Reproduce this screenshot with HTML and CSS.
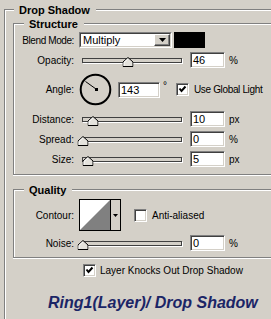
FILE: index.html
```html
<!DOCTYPE html>
<html>
<head>
<meta charset="utf-8">
<link rel="stylesheet" href="styles.css">
</head>
<body>
<div class="panel">
  <div class="group outer">
    <div class="ghead"><span class="seg-l"></span><span class="gtitle">Drop Shadow</span><span class="seg-r"></span></div>
    <div class="gbody outer-body">
      <div class="group inner">
        <div class="ghead"><span class="seg-l seg-in"></span><span class="gtitle">Structure</span><span class="seg-r"></span></div>
        <div class="gbody inner-body structure-body">
          <div class="row r-blend">
            <span class="lbl lbl-tight">Blend Mode:</span>
            <div class="select">
              <div class="sel-in">
                <span class="sel-text">Multiply</span>
                <span class="sel-btn"><svg width="7" height="4" viewBox="0 0 7 4"><polygon points="0,0 7,0 3.5,4" fill="#000"/></svg></span>
              </div>
            </div>
            <span class="swatch"></span>
          </div>
          <div class="row r-slider r-opacity">
            <span class="lbl">Opacity:</span>
            <div class="slider"><div class="track"><span class="thumb" style="left:46%"><svg width="11" height="10" viewBox="0 0 11 10"><polygon points="5.5,0.5 10.5,5 10.5,9.5 0.5,9.5 0.5,5" fill="#e4e2dc" stroke="#000"/><polyline points="1.5,9 1.5,5.4 5.5,1.8" fill="none" stroke="#fff"/></svg></span></div></div>
            <div class="field">46</div><span class="unit">%</span>
          </div>
          <div class="row r-angle">
            <span class="lbl">Angle:</span>
            <svg class="dial" width="33" height="33" viewBox="0 0 33 33"><circle cx="16.5" cy="16.5" r="14.8" fill="none" stroke="#000" stroke-width="2"/><line x1="17" y1="16" x2="6.5" y2="8.5" stroke="#000" stroke-width="1"/><rect x="16" y="15" width="3" height="3" fill="#000"/></svg>
            <div class="field field-angle">143</div><span class="deg">°</span>
            <span class="cb cb-global"><svg width="9" height="9" viewBox="0 0 9 9"><polyline points="1.5,3.5 3.5,6 7.5,1.5" fill="none" stroke="#000" stroke-width="2"/></svg></span>
            <span class="cb-text cb-tight">Use Global Light</span>
          </div>
          <div class="row r-slider r-distance">
            <span class="lbl">Distance:</span>
            <div class="slider"><div class="track"><span class="thumb" style="left:10%"><svg width="11" height="10" viewBox="0 0 11 10"><polygon points="5.5,0.5 10.5,5 10.5,9.5 0.5,9.5 0.5,5" fill="#e4e2dc" stroke="#000"/><polyline points="1.5,9 1.5,5.4 5.5,1.8" fill="none" stroke="#fff"/></svg></span></div></div>
            <div class="field">10</div><span class="unit">px</span>
          </div>
          <div class="row r-slider r-next">
            <span class="lbl">Spread:</span>
            <div class="slider"><div class="track"><span class="thumb" style="left:0%"><svg width="11" height="10" viewBox="0 0 11 10"><polygon points="5.5,0.5 10.5,5 10.5,9.5 0.5,9.5 0.5,5" fill="#e4e2dc" stroke="#000"/><polyline points="1.5,9 1.5,5.4 5.5,1.8" fill="none" stroke="#fff"/></svg></span></div></div>
            <div class="field">0</div><span class="unit">%</span>
          </div>
          <div class="row r-slider r-next">
            <span class="lbl">Size:</span>
            <div class="slider"><div class="track"><span class="thumb" style="left:5%"><svg width="11" height="10" viewBox="0 0 11 10"><polygon points="5.5,0.5 10.5,5 10.5,9.5 0.5,9.5 0.5,5" fill="#e4e2dc" stroke="#000"/><polyline points="1.5,9 1.5,5.4 5.5,1.8" fill="none" stroke="#fff"/></svg></span></div></div>
            <div class="field">5</div><span class="unit">px</span>
          </div>
        </div>
      </div>

      <div class="group inner quality">
        <div class="ghead"><span class="seg-l seg-in"></span><span class="gtitle">Quality</span><span class="seg-r"></span></div>
        <div class="gbody inner-body quality-body">
          <div class="row r-contour">
            <span class="lbl">Contour:</span>
            <div class="contour">
              <svg class="ct-graph" width="30" height="30" viewBox="0 0 30 30"><rect width="30" height="30" fill="#fff"/><polygon points="0,30 30,0 30,30" fill="#808080"/></svg>
              <span class="ct-btn"><svg width="5" height="3" viewBox="0 0 5 3"><polygon points="0,0 5,0 2.5,3" fill="#000"/></svg></span>
            </div>
            <span class="cb cb-anti"></span>
            <span class="cb-text">Anti-aliased</span>
          </div>
          <div class="row r-slider r-noise">
            <span class="lbl">Noise:</span>
            <div class="slider"><div class="track"><span class="thumb" style="left:0%"><svg width="11" height="10" viewBox="0 0 11 10"><polygon points="5.5,0.5 10.5,5 10.5,9.5 0.5,9.5 0.5,5" fill="#e4e2dc" stroke="#000"/><polyline points="1.5,9 1.5,5.4 5.5,1.8" fill="none" stroke="#fff"/></svg></span></div></div>
            <div class="field">0</div><span class="unit">%</span>
          </div>
        </div>
      </div>

      <div class="row r-knock">
        <span class="cb"><svg width="9" height="9" viewBox="0 0 9 9"><polyline points="1.5,3.5 3.5,6 7.5,1.5" fill="none" stroke="#000" stroke-width="2"/></svg></span>
        <span class="cb-text">Layer Knocks Out Drop Shadow</span>
      </div>

      <div class="caption">Ring1(Layer)/ Drop Shadow</div>
    </div>
  </div>
</div>
</body>
</html>
```
FILE: styles.css
```css
* { box-sizing: border-box; }
html, body { margin: 0; }
body {
  background: #d4d0c8;
  font-family: "Liberation Sans", Arial, sans-serif;
  font-size: 10px;
  color: #000;
  width: 271px;
  height: 319px;
  overflow: hidden;
}
.panel { padding-top: 3px; }
.group { display: flex; flex-direction: column; }
.outer { margin-left: 4px; }
.ghead { display: flex; height: 14px; }
.seg-l {
  width: 10px;
  margin-top: 6px;
  border-top: 1px solid #808080;
  border-left: 1px solid #808080;
  box-shadow: inset 1px 1px #fff;
}
.seg-in { width: 11px; }
.seg-r {
  flex: 1;
  margin-top: 6px;
  border-top: 1px solid #808080;
  box-shadow: inset 0 1px #fff;
}
.gtitle {
  font-weight: bold;
  font-size: 11px;
  line-height: 14px;
  padding: 0 6px 0 5px;
  white-space: nowrap;
}
.gbody {
  border-left: 1px solid #808080;
  box-shadow: inset 1px 0 #fff;
}
.outer-body { height: 302px; }
.inner { margin-left: 8px; }
.quality { margin-top: 8px; }
.inner-body {
  border-bottom: 1px solid #808080;
  box-shadow: inset 1px 0 #fff, 0 1px #fff;
}
.structure-body { padding-bottom: 7px; }
.quality-body { padding-bottom: 6px; }

.row { display: flex; align-items: center; white-space: nowrap; }
.lbl { width: 60px; margin-right: 5px; text-align: right; }
.lbl-tight { letter-spacing: -0.4px; }

.r-blend { margin-top: 1px; height: 16px; }
.r-opacity { margin-top: 4px; }
.r-angle { margin-top: 5px; height: 33px; }
.r-distance { margin-top: 5px; }
.r-next { margin-top: 4px; }
.r-contour { margin-top: 2px; height: 32px; }
.r-noise { margin-top: 4px; }

.select {
  width: 93px;
  height: 16px;
  border: 1px solid;
  border-color: #808080 #fff #fff #808080;
  display: flex;
}
.sel-in {
  flex: 1;
  display: flex;
  align-items: center;
  background: #fff;
  border: 1px solid;
  border-color: #404040 #d4d0c8 #d4d0c8 #404040;
}
.sel-text { flex: 1; font-size: 11px; padding-left: 2px; line-height: 12px; }
.sel-btn {
  width: 16px;
  height: 12px;
  background: #d4d0c8;
  border: 1px solid;
  border-color: #fff #404040 #404040 #fff;
  box-shadow: inset -1px -1px #808080;
  display: flex;
  align-items: center;
  justify-content: center;
}
.swatch { width: 31px; height: 16px; background: #000; margin-left: 2px; }

.slider {
  width: 106px;
  height: 16px;
  padding: 0 3px;
  display: flex;
  align-items: center;
}
.track {
  position: relative;
  flex: 1;
  height: 5px;
  border: 1px solid #404040;
  box-shadow: 1px 1px 0 #fff;
  background: #d4d0c8;
}
.thumb {
  position: absolute;
  top: -2px;
  width: 11px;
  height: 10px;
  transform: translateX(-50%);
  display: block;
}
.thumb svg { display: block; }

.field {
  width: 35px;
  height: 16px;
  margin-left: 5px;
  background: #fff;
  border: 1px solid;
  border-color: #808080 #fff #fff #808080;
  box-shadow: inset 1px 1px #404040, inset -1px -1px #d4d0c8;
  font-size: 11px;
  line-height: 14px;
  padding-left: 2px;
}
.unit { margin-left: 4px; }

.dial { display: block; }
.field-angle { width: 42px; margin-left: 6px; }
.deg { margin-left: 3px; align-self: flex-start; margin-top: 7px; }

.cb {
  width: 13px;
  height: 13px;
  background: #fff;
  border: 1px solid;
  border-color: #808080 #fff #fff #808080;
  box-shadow: inset 1px 1px #404040, inset -1px -1px #d4d0c8;
  display: flex;
  align-items: center;
  justify-content: center;
  flex: none;
}
.cb svg { display: block; }
.cb-global { margin-left: 9px; }
.cb-text { margin-left: 5px; }
.cb-tight { letter-spacing: -0.35px; }
.cb-anti { margin-left: 13px; }

.contour {
  width: 42px;
  height: 32px;
  border: 1px solid #000;
  display: flex;
}
.ct-graph { display: block; }
.ct-btn {
  flex: 1;
  border-left: 1px solid #000;
  background: #d4d0c8;
  display: flex;
  align-items: center;
  justify-content: center;
}
.ct-btn svg { display: block; }

.r-knock { margin-top: 6px; height: 13px; padding-left: 78px; }
.r-knock .cb-text { margin-left: 4px; }

.caption {
  margin-top: 17px;
  padding-left: 43px;
  font-size: 16px;
  font-weight: bold;
  font-style: italic;
  color: #1b2566;
  white-space: nowrap;
}
```
